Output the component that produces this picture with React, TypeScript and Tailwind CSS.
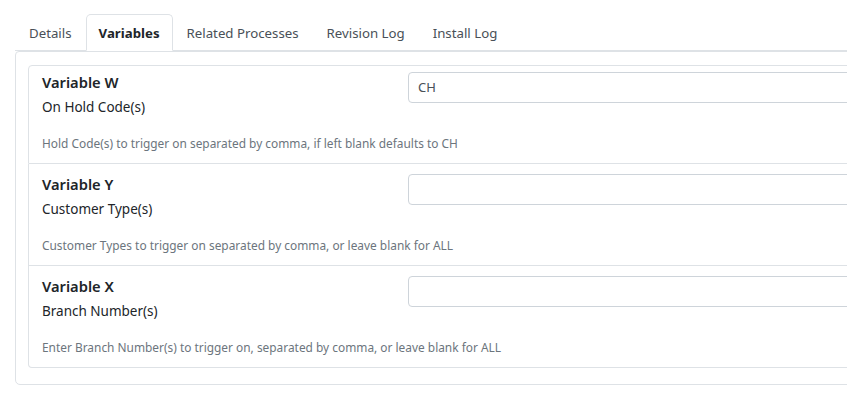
import React from "react";

const tabs = ["Details", "Variables", "Related Processes", "Revision Log", "Install Log"];

const vars = [
  {
    title: "Variable W",
    label: "On Hold Code(s)",
    value: "CH",
    help: "Hold Code(s) to trigger on separated by comma, if left blank defaults to CH",
  },
  {
    title: "Variable Y",
    label: "Customer Type(s)",
    value: "",
    help: "Customer Types to trigger on separated by comma, or leave blank for ALL",
  },
  {
    title: "Variable X",
    label: "Branch Number(s)",
    value: "",
    help: "Enter Branch Number(s) to trigger on, separated by comma, or leave blank for ALL",
  },
];

export default function App() {
  return (
    <div className="w-[847px] h-[402px] overflow-hidden bg-white font-['Noto_Sans',sans-serif] text-[#212529]">
      <div className="w-[1000px] pl-[15px] pt-[14px]">
        <ul className="flex border-b border-[#dee2e6]">
          {tabs.map((t) => {
            const active = t === "Variables";
            return (
              <li
                key={t}
                className={
                  active
                    ? "-mb-px h-[37px] flex items-center pt-[3px] px-[12px] border border-[#dee2e6] border-b-white rounded-t-[5px] bg-white text-[13.25px] font-bold text-[#212529]"
                    : "-mb-px h-[37px] flex items-center pt-[3px] px-[13px] border border-transparent text-[13.25px] text-[#495057]"
                }
              >
                {t}
              </li>
            );
          })}
        </ul>
        <div className="border border-[#dee2e6] rounded-b-[5px] rounded-tr-[5px] rounded-tl-[4px] px-[12px] pt-[13px] pb-[16px]">
          <div className="flex flex-col">
            {vars.map((v, i) => (
              <div
                key={v.title}
                className={
                  i === 0
                    ? "border border-[#dee2e6] rounded-t-[4px] pl-[13px] pt-[6px] pb-[11px]"
                    : i === 1
                    ? "border-x border-b border-[#dee2e6] pl-[13px] pt-[10px] pb-[11px]"
                    : "border-x border-b border-[#dee2e6] rounded-b-[4px] pl-[13px] pt-[10px] pb-[11px]"
                }
              >
                <div className="flex">
                  <div className="w-[366px] shrink-0">
                    <div className="text-[14.7px] font-semibold leading-[20px]">{v.title}</div>
                    <div className="text-[13.5px] leading-[20px] mt-[5px]">{v.label}</div>
                  </div>
                  <div className="flex-1">
                    <div className="h-[31px] border border-[#ced4da] rounded-[4px] flex items-center px-[9px] text-[13px] text-[#495057]">
                      {v.value}
                    </div>
                  </div>
                </div>
                <div className="mt-[17px] text-[11.9px] leading-[18px] text-[#6c757d]">{v.help}</div>
              </div>
            ))}
          </div>
        </div>
      </div>
    </div>
  );
}
